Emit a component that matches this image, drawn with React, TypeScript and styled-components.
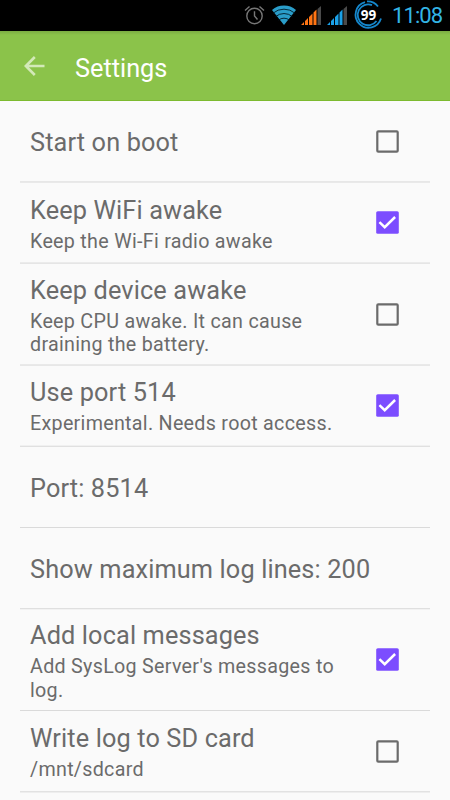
import React from "react";
import styled, { createGlobalStyle } from "styled-components";

const Global = createGlobalStyle`
  * { box-sizing: border-box; }
  html, body { margin: 0; padding: 0; background: #fafafa; }
  body { font-family: Roboto, "Noto Sans", sans-serif; overflow: hidden; }
`;

const Screen = styled.div`
  width: 450px;
  height: 800px;
  overflow: hidden;
  background: #fafafa;
`;

const StatusBar = styled.div`
  height: 31px;
  background: #000;
  display: flex;
  align-items: flex-start;
  padding-left: 243px;
  svg { display: block; flex: none; }
`;

const Clock = styled.span`
  margin-left: 9px;
  color: #33b5e5;
  font-size: 22px;
  line-height: 32px;
  letter-spacing: -0.9px;
  white-space: nowrap;
`;

const AppBar = styled.header`
  height: 70px;
  background: linear-gradient(#7bac42 0, #8bc34a 4px, #8bc34a 69px, #7cba2f 69px);
  display: flex;
  align-items: center;
  padding-left: 24px;
  svg { display: block; flex: none; }
`;

const Heading = styled.h1`
  margin: 6px 0 0 30px;
  color: #fff;
  font-size: 25.3px;
  font-weight: 400;
  line-height: 30px;
  letter-spacing: 0;
`;

const List = styled.main`
  padding: 0 20px;
`;

const Row = styled.div<{ $h: number; $line: string; $above?: string; $below?: string }>`
  height: ${(p) => p.$h}px;
  display: flex;
  align-items: center;
  justify-content: space-between;
  padding: 0 31px 0 10px;
  border-bottom: 1px solid ${(p) => p.$line};
  box-shadow: inset 0 -1px ${(p) => p.$above ?? "transparent"}, 0 1px ${(p) => p.$below ?? "transparent"};
`;

const Labels = styled.div`
  color: #6b6b6b;
  padding-top: 4px;
`;

const Title = styled.div`
  font-size: 25.3px;
  line-height: 30px;
  letter-spacing: 0.13px;
  white-space: nowrap;
`;

const Summary = styled.div`
  margin-top: 4px;
  font-size: 19.7px;
  line-height: 23.5px;
  letter-spacing: 0.29px;
  white-space: pre;
`;

const Box = styled.svg`
  display: block;
  flex: none;
  width: 23px;
  height: 23px;
`;

function Check({ on }: { on: boolean }) {
  return on ? (
    <Box viewBox="0 0 23 23">
      <rect x="0.2" y="0.2" width="22.6" height="22.6" rx="1.6" fill="#7c4dff" />
      <path d="M3.400 11.200 8.700 16.200 19.100 6" fill="none" stroke="#fff" strokeWidth="2.500" />
    </Box>
  ) : (
    <Box viewBox="0 0 23 23">
      <rect x="1.3" y="1.3" width="20.4" height="20.4" rx="1" fill="none" stroke="#6b6b6b" strokeWidth="2.2" />
    </Box>
  );
}

const Bars = ({ color }: { color: string }) => (
  <svg width="21" height="31" viewBox="0 0 21 31">
    <path d="M0 25l3-3v3zM4 25v-4l3-3v7zM8 25v-8l3.500-3.500v11.500zM12.500 25v-12.500l3-3v15.500z" fill={color} />
    <path d="M16.500 25V9L20 6v19z" fill="#4a4a4a" />
  </svg>
);

type Item = {
  title: string;
  summary?: string;
  on?: boolean;
  h: number;
  line: string;
  above?: string;
  below?: string;
};

const items: Item[] = [
  { title: "Start on boot", on: false, h: 81, line: "#e7e7e7", below: "#e9e9e9" },
  { title: "Keep WiFi awake", summary: "Keep the Wi-Fi radio awake", on: true, h: 82, line: "#e5e5e5", above: "#ebebeb" },
  { title: "Keep device awake", summary: "Keep CPU awake. It can cause\ndraining the battery.", on: false, h: 101, line: "#e9e9e9", below: "#e7e7e7" },
  { title: "Use port 514", summary: "Experimental. Needs root access.", on: true, h: 81, line: "#f0f0f0", below: "#e0e0e0" },
  { title: "Port: 8514", h: 82, line: "#dadada" },
  { title: "Show maximum log lines: 200", h: 81, line: "#dfdfdf", below: "#f2f2f2" },
  { title: "Add local messages", summary: "Add SysLog Server's messages to\nlog.", on: true, h: 102, line: "#dadada" },
  { title: "Write log to SD card", summary: "/mnt/sdcard", on: false, h: 81, line: "#e2e2e2", below: "#eeeeee" },
];

export default function App() {
  return (
    <Screen>
      <Global />
      <StatusBar>
        <svg width="29" height="31" viewBox="0 0 29 31" fill="none" stroke="#777" strokeWidth="1.400">
          <circle cx="11.500" cy="16" r="7.700" />
          <path d="M11.500 11.300V16l3 3.500M2 10.500l4.500-4M21 10.500l-4.500-4" />
        </svg>
        <svg width="29" height="31" viewBox="0 0 29 31">
          <path d="M12 25 0 10a18.500 18.500 0 0 1 24 0z" fill="#2a9dc9" />
          <path d="M1 13.200a17 17 0 0 1 22 0M3.500 16.700a13 13 0 0 1 17 0M6.500 20.200a8.500 8.500 0 0 1 11 0" fill="none" stroke="#001a26" strokeWidth="0.900" />
        </svg>
        <Bars color="#ff7514" />
        <svg width="5" height="31" />
        <Bars color="#1ba1e8" />
        <svg width="5" height="31" />
        <svg width="30" height="31" viewBox="0 0 30 31" fill="none">
          <path d="M12 2.200A13 13 0 1 0 28 18.500" stroke="#1587cc" strokeWidth="1.800" />
          <path d="M19 5.200A10.400 10.400 0 1 0 23.500 21" stroke="#1587cc" strokeWidth="1.800" />
          <path d="M14 1.400A13 13 0 0 1 25 6.500" stroke="#1587cc" strokeWidth="1.800" />
          <text x="15.500" y="19.500" textAnchor="middle" fill="#fff" fontFamily="Open Sans, sans-serif" fontWeight="700" fontSize="13.500">99</text>
        </svg>
        <Clock>11:08</Clock>
      </StatusBar>
      <AppBar>
        <svg width="21" height="20" viewBox="0 0 21 20" fill="none" stroke="#d3e9b8" strokeWidth="2.600">
          <path d="M20.500 10H2M10.800 1 1.800 10l9 9" />
        </svg>
        <Heading>Settings</Heading>
      </AppBar>
      <List>
        {items.map((it) => (
          <Row key={it.title} $h={it.h} $line={it.line} $above={it.above} $below={it.below}>
            <Labels>
              <Title>{it.title}</Title>
              {it.summary && <Summary>{it.summary}</Summary>}
            </Labels>
            {it.on !== undefined && <Check on={it.on} />}
          </Row>
        ))}
      </List>
    </Screen>
  );
}
